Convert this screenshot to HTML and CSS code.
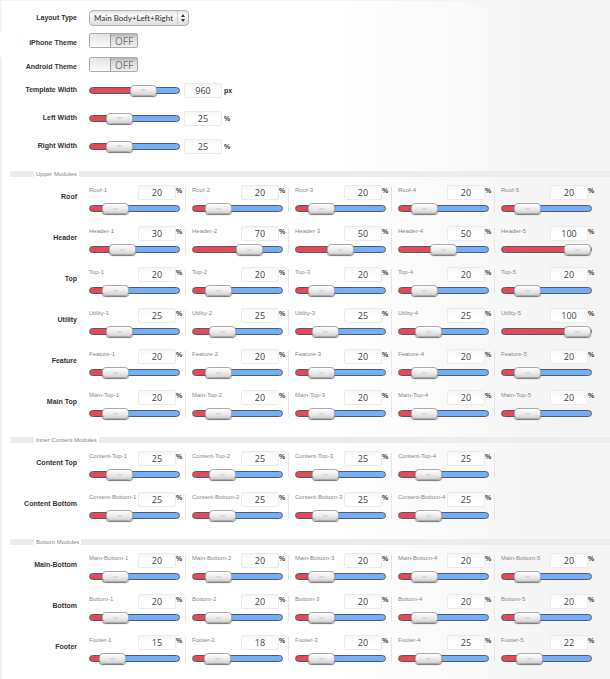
FILE: index.html
```html
<!DOCTYPE html>
<html lang="en">
<head>
<meta charset="utf-8">
<title>Layout settings</title>
<link rel="stylesheet" href="styles.css">
</head>
<body>
<main class="panel">
  <form class="settings">
    <div class="field">
      <label class="field-label" for="layout-type">Layout Type</label>
      <span class="select-wrap">
        <select class="select" id="layout-type"><option>Main Body+Left+Right</option></select>
        <svg class="select-arrows" viewBox="0 0 6 10" aria-hidden="true"><path d="M3 1L5 4H1zM3 9L1 6h4z"/></svg>
      </span>
    </div>
    <div class="field field-toggle">
      <label class="field-label" for="iphone-theme">iPhone Theme</label>
      <label class="toggle"><input class="toggle-input" id="iphone-theme" type="checkbox"><span class="toggle-knob"></span><span class="toggle-text">OFF</span></label>
    </div>
    <div class="field field-toggle">
      <label class="field-label" for="android-theme">Android Theme</label>
      <label class="toggle"><input class="toggle-input" id="android-theme" type="checkbox"><span class="toggle-knob"></span><span class="toggle-text">OFF</span></label>
    </div>
    <div id="widths"></div>
    <div class="modules" id="modules"></div>
  </form>
</main>
<script src="script.js"></script>
</body>
</html>
```
FILE: styles.css
```css
* {
  box-sizing: border-box;
}

body {
  margin: 0;
  background: linear-gradient(#f4f4f4 32px, #fff 32px, #fff 57px, #f1f1f1 57px);
  color: #333;
  font-family: "Liberation Sans", Arial, sans-serif;
}

.panel {
  min-height: 100vh;
  margin-left: 2px;
  padding: 7px 0 6px 8px;
  border-top: 1px solid #f4f4f4;
  background: linear-gradient(to right, #fff 55%, #f4f4f4 92%, #f4f4f4);
}

.settings {
  margin: 0;
}

.field {
  display: flex;
  align-items: center;
  height: 20px;
}

.field-toggle {
  height: 24px;
}

.field-toggle .field-label {
  padding-top: 6px;
}

.field-width {
  height: 28px;
}

.field-label,
.row-label {
  flex: none;
  width: 67px;
  margin-right: 12px;
  font-size: 7px;
  font-weight: bold;
  line-height: 8px;
  text-align: right;
  white-space: nowrap;
}

.select-wrap {
  position: relative;
  display: flex;
}

.select {
  appearance: none;
  width: 100px;
  height: 16px;
  padding: 0 0 0 4px;
  border: 1px solid #b4b4b4;
  border-radius: 4px;
  background: linear-gradient(#e4e4e4, #f8f8f8 30%, #dedede);
  color: #333;
  font: 8px "Lato", sans-serif;
}

.select-arrows {
  position: absolute;
  top: 1px;
  right: 1px;
  width: 11px;
  height: 14px;
  padding: 2px 1px;
  border-left: 1px solid #ccc;
  fill: #333;
}

.toggle {
  position: relative;
  display: flex;
  width: 49px;
  height: 15px;
  border: 1px solid #aaa;
  border-radius: 2px;
  background: linear-gradient(#b4b4b4, #d8d8d8 30%, #eee);
}

.toggle-input {
  position: absolute;
  inset: 0;
  margin: 0;
  opacity: 0;
}

.toggle-knob {
  width: 21px;
  border-right: 1px solid #999;
  border-radius: 1px;
  background: linear-gradient(#e4e4e4, #fafafa);
}

.toggle-text {
  flex: 1;
  color: #777;
  font: 10px/15px "Open Sans", sans-serif;
  text-align: center;
}

.slider {
  appearance: none;
  display: block;
  width: 91px;
  height: 13px;
  margin: 0;
  background: none;
}

.slider::-webkit-slider-runnable-track {
  height: 7px;
  border: 1px solid #555b66;
  border-radius: 4px;
  background: linear-gradient(to right, #e54858 var(--fill), #74adfa var(--fill));
}

.slider::-webkit-slider-thumb {
  appearance: none;
  width: 27px;
  height: 11px;
  margin-top: -3px;
  border: 1px solid #aaa;
  border-radius: 4px;
  background:
    linear-gradient(#d9d9d9, #d9d9d9) center / 5px 2px no-repeat,
    linear-gradient(#fff, #e9e9e9 60%, #d2d2d2);
  box-shadow: 0 1px 1px #777;
}

.value {
  width: 38px;
  height: 15px;
  padding: 0;
  border: 1px solid #ebebeb;
  border-radius: 2px;
  background: linear-gradient(#f7f7f7, #fff 50%);
  color: #444;
  font: 9px "Open Sans", sans-serif;
  text-align: center;
}

.unit {
  font-size: 7px;
  font-weight: bold;
  line-height: 9px;
}

.field-width .value {
  margin: 0 2px 0 4px;
}

.modules {
  padding-top: 4px;
}

.group {
  margin: 0;
  padding: 6px 0 0;
  border: 0;
}

.group + .group {
  margin-top: 6px;
}

.modules .group:first-child {
  margin-top: 6px;
}

.group-title {
  display: flex;
  align-items: center;
  width: 100%;
  padding: 0;
  color: #888;
  font-size: 6px;
  line-height: 8px;
}

.group-title::before,
.group-title::after {
  content: "";
  width: 24px;
  height: 6px;
  margin-right: 2px;
  background: #ececec;
}

.group-title::after {
  flex: 1;
  margin: 0 0 0 2px;
}

.row {
  display: flex;
  height: 41px;
}

.row-label {
  padding-top: 9px;
}

.cells {
  display: flex;
}

.cell {
  width: 97px;
  height: 28px;
  margin-right: 6px;
  padding-top: 1px;
  background: repeating-linear-gradient(#ddd 0 1px, #eee 1px 2px) right bottom / 1px 25px no-repeat;
}

.cell:nth-child(5) {
  background: none;
}

.cell-head {
  display: flex;
  height: 17px;
}

.cell-label,
.cell .unit {
  padding-top: 1px;
}

.cell-label {
  width: 49px;
  color: #888;
  font-size: 6px;
  line-height: 8px;
  white-space: nowrap;
}
```
FILE: script.js
```js
const widths = [
  ["Template Width", 960, "px", 1500],
  ["Left Width", 25, "%", 100],
  ["Right Width", 25, "%", 100]
];

const groups = [
  ["Upper Modules", [
    ["Roof", [20, 20, 20, 20, 20]],
    ["Header", [30, 70, 50, 50, 100]],
    ["Top", [20, 20, 20, 20, 20]],
    ["Utility", [25, 25, 25, 25, 100]],
    ["Feature", [20, 20, 20, 20, 20]],
    ["Main Top", [20, 20, 20, 20, 20]]
  ]],
  ["Inner Content Modules", [
    ["Content Top", [25, 25, 25, 25]],
    ["Content Bottom", [25, 25, 25, 25]]
  ]],
  ["Bottom Modules", [
    ["Main-Bottom", [20, 20, 20, 20, 20]],
    ["Bottom", [20, 20, 20, 20, 20]],
    ["Footer", [15, 18, 20, 25, 22]]
  ]]
];

const slug = (name) => name.replace(/ /g, "-");

const slider = (name, value, max) =>
  `<input class="slider" type="range" min="0" max="${max}" value="${value}" aria-label="${name} slider" style="--fill:${value / max * 100}%">`;

const box = (id, value) =>
  `<input class="value" type="text" id="${id}" value="${value}">`;

document.getElementById("widths").innerHTML = widths.map(([name, value, unit, max]) => `
  <div class="field field-width" data-pair>
    <label class="field-label" for="${slug(name)}">${name}</label>
    ${slider(name, value, max)}${box(slug(name), value)}<span class="unit">${unit}</span>
  </div>`).join("");

const cell = (id, value) => `
  <div class="cell" data-pair>
    <div class="cell-head">
      <label class="cell-label" for="${id}">${id}</label>${box(id, value)}<span class="unit">%</span>
    </div>
    ${slider(id, value, 100)}
  </div>`;

document.getElementById("modules").innerHTML = groups.map(([title, rows]) => `
  <fieldset class="group">
    <legend class="group-title">${title}</legend>
    ${rows.map(([name, values]) => `
      <div class="row">
        <div class="row-label">${name}</div>
        <div class="cells">${values.map((v, i) => cell(`${slug(name)}-${i + 1}`, v)).join("")}</div>
      </div>`).join("")}
  </fieldset>`).join("");

document.querySelectorAll("[data-pair]").forEach((pair) => {
  const range = pair.querySelector(".slider");
  const text = pair.querySelector(".value");
  const paint = () => range.style.setProperty("--fill", `${range.value / range.max * 100}%`);
  range.addEventListener("input", () => { text.value = range.value; paint(); });
  text.addEventListener("change", () => { range.value = text.value; paint(); });
});
```
